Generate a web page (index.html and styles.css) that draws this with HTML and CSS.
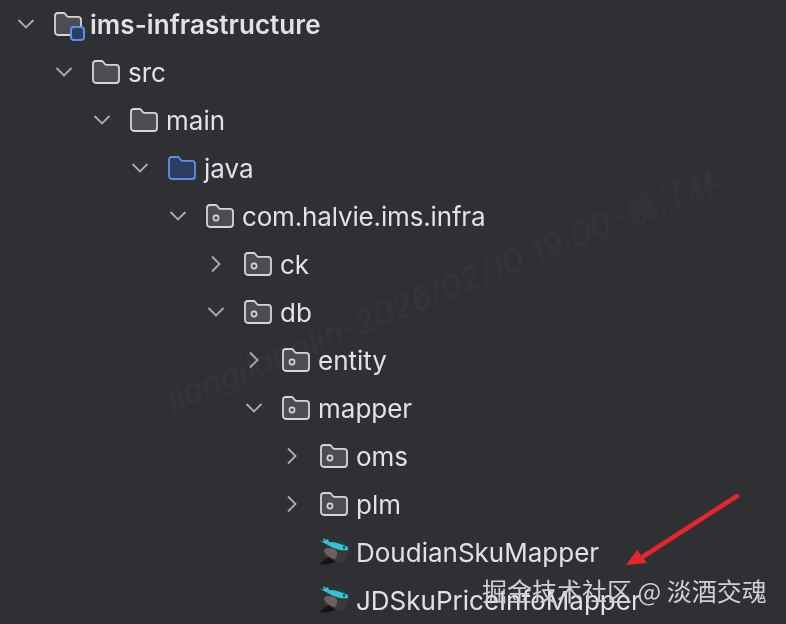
FILE: index.html
```html
<!DOCTYPE html>
<html lang="zh">
<head>
<meta charset="utf-8">
<title>Project tree</title>
<link rel="stylesheet" href="styles.css">
</head>
<body>
<svg class="defs" width="0" height="0" aria-hidden="true">
  <symbol id="down" viewBox="0 0 20 20"><path d="M2.5 6 10 13.5 17.5 6" fill="none" stroke="#a9abb0" stroke-width="1.9"/></symbol>
  <symbol id="right" viewBox="0 0 20 20"><path d="M6 2.5 13.5 10 6 17.5" fill="none" stroke="#a9abb0" stroke-width="1.9"/></symbol>
  <symbol id="folder" viewBox="0 0 28 24"><path d="M1 4a3 3 0 0 1 3-3h5.5a2 2 0 0 1 1.5.7L13 4.2a2 2 0 0 0 1.5.7H24a3 3 0 0 1 3 3V20a3 3 0 0 1-3 3H4a3 3 0 0 1-3-3Z" fill="#4b4d52" stroke="#d5d6d9" stroke-width="1.8"/></symbol>
  <symbol id="folder-blue" viewBox="0 0 28 24"><path d="M1 4a3 3 0 0 1 3-3h5.5a2 2 0 0 1 1.5.7L13 4.2a2 2 0 0 0 1.5.7H24a3 3 0 0 1 3 3V20a3 3 0 0 1-3 3H4a3 3 0 0 1-3-3Z" fill="#2c3d63" stroke="#5f8fe8" stroke-width="1.8"/></symbol>
  <symbol id="package" viewBox="0 0 28 24"><path d="M1 4a3 3 0 0 1 3-3h5.5a2 2 0 0 1 1.5.7L13 4.2a2 2 0 0 0 1.5.7H24a3 3 0 0 1 3 3V20a3 3 0 0 1-3 3H4a3 3 0 0 1-3-3Z" fill="#4b4d52" stroke="#d5d6d9" stroke-width="1.8"/><circle cx="10" cy="14" r="2.6" fill="none" stroke="#d5d6d9" stroke-width="1.6"/></symbol>
  <symbol id="bird" viewBox="0 0 32 30">
    <ellipse cx="19" cy="15" rx="12" ry="11.500" fill="#3d3838"/>
    <path d="M2 27c4-2 6-5 9-7l8 5c-5 2-11 3-17 2Z" fill="#141414"/>
    <path d="M7 13c3-3 9-2 12 0 2 3 1 7-1 9-5-1-10-4-11-9Z" fill="#6f5f5d"/>
    <path d="M6 1l3 2 2-1 1 3c6 0 13 2 19 5v3c-7 1-14-1-20-5L3 4l4 .5Z" fill="#2bc7d3"/>
    <circle cx="27" cy="10.500" r="1.200" fill="#0b3236"/>
  </symbol>
</svg>

<main class="canvas">
  <div class="stamp">jiangjianglin-2026/02/10 19:00-姚江林</div>

  <ul class="tree">
    <li>
      <div class="row root"><svg class="chev"><use href="#down"/></svg><span class="icon"><svg class="glyph"><use href="#folder"/></svg><span class="badge"></span></span><span>ims-infrastructure</span></div>
      <ul>
        <li>
          <div class="row"><svg class="chev"><use href="#down"/></svg><svg class="glyph"><use href="#folder"/></svg><span>src</span></div>
          <ul>
            <li>
              <div class="row"><svg class="chev"><use href="#down"/></svg><svg class="glyph"><use href="#folder"/></svg><span>main</span></div>
              <ul>
                <li>
                  <div class="row"><svg class="chev"><use href="#down"/></svg><svg class="glyph"><use href="#folder-blue"/></svg><span>java</span></div>
                  <ul>
                    <li>
                      <div class="row"><svg class="chev"><use href="#down"/></svg><svg class="glyph"><use href="#package"/></svg><span class="tight">com.halvie.ims.infra</span></div>
                      <ul>
                        <li><div class="row"><svg class="chev"><use href="#right"/></svg><svg class="glyph"><use href="#package"/></svg><span>ck</span></div></li>
                        <li>
                          <div class="row"><svg class="chev"><use href="#down"/></svg><svg class="glyph"><use href="#package"/></svg><span>db</span></div>
                          <ul>
                            <li><div class="row"><svg class="chev"><use href="#right"/></svg><svg class="glyph"><use href="#package"/></svg><span>entity</span></div></li>
                            <li>
                              <div class="row"><svg class="chev"><use href="#down"/></svg><svg class="glyph"><use href="#package"/></svg><span>mapper</span></div>
                              <ul>
                                <li><div class="row"><svg class="chev"><use href="#right"/></svg><svg class="glyph"><use href="#package"/></svg><span>oms</span></div></li>
                                <li><div class="row"><svg class="chev"><use href="#right"/></svg><svg class="glyph"><use href="#package"/></svg><span>plm</span></div></li>
                                <li><div class="row"><span class="chev"></span><svg class="glyph bird"><use href="#bird"/></svg><span>DoudianSkuMapper</span></div></li>
                                <li><div class="row"><span class="chev"></span><svg class="glyph bird"><use href="#bird"/></svg><span>JDSkuPriceInfoMapper</span></div></li>
                              </ul>
                            </li>
                          </ul>
                        </li>
                      </ul>
                    </li>
                  </ul>
                </li>
              </ul>
            </li>
          </ul>
        </li>
      </ul>
    </li>
  </ul>

  <svg class="arrow" viewBox="0 0 130 90" aria-hidden="true">
    <path d="M117 11 24 71" stroke="#e6262b" stroke-width="4.500" stroke-linecap="round" fill="none"/>
    <path d="M6 80 17 65 27 78Z" fill="#e6262b"/>
  </svg>

  <div class="credit">掘金技术社区 @ 淡酒交魂</div>
</main>
</body>
</html>
```
FILE: styles.css
```css
html, body {
  margin: 0;
  height: 100%;
  background: #2f3033;
  overflow: hidden;
}

.defs {
  position: absolute;
}

.canvas {
  position: relative;
  width: 786px;
  height: 624px;
  overflow: hidden;
  font-family: Inter, "Liberation Sans", sans-serif;
  font-size: 26px;
  color: #e0e2e6;
  filter: blur(0.35px);
}

.tree,
.tree ul {
  list-style: none;
  margin: 0;
  padding: 0;
}

.tree {
  position: relative;
  padding-left: 16px;
}

.tree ul {
  padding-left: 38px;
}

.row {
  display: flex;
  align-items: center;
  height: 48px;
  white-space: nowrap;
}

.root {
  font-weight: 600;
  letter-spacing: 0.06px;
}

.tight {
  letter-spacing: -0.16px;
}

.chev {
  flex: none;
  width: 20px;
  height: 20px;
  margin-right: 18px;
}

.glyph {
  flex: none;
  width: 28px;
  height: 24px;
  margin-right: 8px;
}

.icon {
  position: relative;
  display: flex;
}

.badge {
  position: absolute;
  left: 16px;
  top: 14px;
  width: 11px;
  height: 11px;
  background: #2c3d63;
  border: 2px solid #5f8fe8;
  border-radius: 4px;
}

.bird {
  width: 32px;
  height: 30px;
  margin-left: -3px;
  margin-right: 7px;
}

.stamp {
  position: absolute;
  left: 168px;
  top: 380px;
  font-size: 33px;
  line-height: 40px;
  font-style: italic;
  color: #36373a;
  white-space: nowrap;
  filter: blur(1px);
  transform: rotate(-22deg);
  transform-origin: left center;
}

.arrow {
  position: absolute;
  left: 620px;
  top: 485px;
  width: 130px;
  height: 90px;
}

.credit {
  position: absolute;
  left: 482px;
  top: 574px;
  font-family: "Noto Sans CJK SC", "Liberation Sans", sans-serif;
  font-size: 25px;
  line-height: 32px;
  color: #cfd0d3;
  white-space: nowrap;
}
```
